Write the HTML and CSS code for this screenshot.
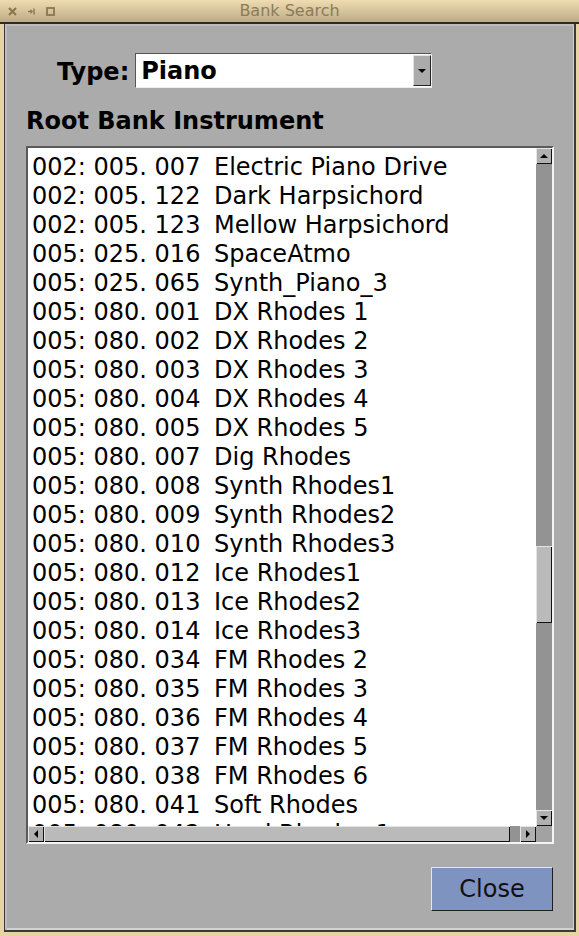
FILE: index.html
```html
<!DOCTYPE html>
<html>
<head>
<meta charset="utf-8">
<link rel="stylesheet" href="styles.css">
</head>
<body>
<div class="window">
  <div class="titlebar">
    <div class="tb-icons">
      <svg class="ic" width="9" height="9" viewBox="0 0 9 9"><path d="M1 1L8 8M8 1L1 8" stroke="#8a7750" stroke-width="2.2" fill="none"/></svg>
      <svg class="ic pin" width="7" height="7" viewBox="0 0 7 7"><path d="M0 3.5H4" stroke="#8a7750" stroke-width="1.4" fill="none"/><path d="M2.5 1L5 3.5L2.5 6Z" fill="#8a7750"/><path d="M6 0.5V6.5" stroke="#8a7750" stroke-width="1.4"/></svg>
      <svg class="ic" width="9" height="9" viewBox="0 0 9 9"><rect x="1" y="1" width="7" height="7" stroke="#8a7750" stroke-width="1.8" fill="none"/></svg>
    </div>
    <div class="title">Bank Search</div>
    <div></div>
  </div>
  <div class="frame">
    <div class="client">
      <div class="type-row">
        <span class="type-label">Type:</span>
        <div class="choice">
          <span class="choice-text">Piano</span>
          <span class="choice-btn"><span class="tri tri-down"></span></span>
        </div>
      </div>
      <div class="heading">Root Bank Instrument</div>
      <div class="browser">
        <div class="rows">
          <div class="row"><span class="num">002: 005. 007</span><span>Electric Piano Drive</span></div>
          <div class="row"><span class="num">002: 005. 122</span><span>Dark Harpsichord</span></div>
          <div class="row"><span class="num">002: 005. 123</span><span>Mellow Harpsichord</span></div>
          <div class="row"><span class="num">005: 025. 016</span><span>SpaceAtmo</span></div>
          <div class="row"><span class="num">005: 025. 065</span><span>Synth_Piano_3</span></div>
          <div class="row"><span class="num">005: 080. 001</span><span>DX Rhodes 1</span></div>
          <div class="row"><span class="num">005: 080. 002</span><span>DX Rhodes 2</span></div>
          <div class="row"><span class="num">005: 080. 003</span><span>DX Rhodes 3</span></div>
          <div class="row"><span class="num">005: 080. 004</span><span>DX Rhodes 4</span></div>
          <div class="row"><span class="num">005: 080. 005</span><span>DX Rhodes 5</span></div>
          <div class="row"><span class="num">005: 080. 007</span><span>Dig Rhodes</span></div>
          <div class="row"><span class="num">005: 080. 008</span><span>Synth Rhodes1</span></div>
          <div class="row"><span class="num">005: 080. 009</span><span>Synth Rhodes2</span></div>
          <div class="row"><span class="num">005: 080. 010</span><span>Synth Rhodes3</span></div>
          <div class="row"><span class="num">005: 080. 012</span><span>Ice Rhodes1</span></div>
          <div class="row"><span class="num">005: 080. 013</span><span>Ice Rhodes2</span></div>
          <div class="row"><span class="num">005: 080. 014</span><span>Ice Rhodes3</span></div>
          <div class="row"><span class="num">005: 080. 034</span><span>FM Rhodes 2</span></div>
          <div class="row"><span class="num">005: 080. 035</span><span>FM Rhodes 3</span></div>
          <div class="row"><span class="num">005: 080. 036</span><span>FM Rhodes 4</span></div>
          <div class="row"><span class="num">005: 080. 037</span><span>FM Rhodes 5</span></div>
          <div class="row"><span class="num">005: 080. 038</span><span>FM Rhodes 6</span></div>
          <div class="row"><span class="num">005: 080. 041</span><span>Soft Rhodes</span></div>
          <div class="row"><span class="num">005: 080. 042</span><span>Hard Rhodes 1</span></div>
        </div>
        <div class="vscroll">
          <div class="sb-btn"><span class="tri tri-up"></span></div>
          <div class="trough vtrough"><div class="thumb" style="margin-top:382px;height:77px"></div></div>
          <div class="sb-btn"><span class="tri tri-down"></span></div>
        </div>
        <div class="hscroll">
          <div class="sb-btn"><span class="tri tri-left"></span></div>
          <div class="trough htrough"><div class="thumb" style="width:466px"></div></div>
          <div class="sb-btn"><span class="tri tri-right"></span></div>
        </div>
        <div class="corner"></div>
      </div>
      <div class="actions">
        <button class="close">Close</button>
      </div>
    </div>
  </div>
</div>
</body>
</html>
```
FILE: styles.css
```css
html, body {
  margin: 0;
  padding: 0;
}
body {
  font-family: "DejaVu Sans", "Noto Sans", sans-serif;
  background: #e8d3a5;
}
.window {
  width: 579px;
  height: 936px;
  display: flex;
  flex-direction: column;
  background: #e8d3a5;
}
.titlebar {
  flex: none;
  height: 22px;
  border-bottom: 2px solid #2c2a26;
  background: linear-gradient(#f0dcb1, #bbab86);
  display: grid;
  grid-template-columns: 1fr auto 1fr;
  align-items: center;
}
.tb-icons {
  display: flex;
  align-items: center;
  padding-left: 8px;
}
.tb-icons .ic {
  display: block;
}
.tb-icons .pin {
  margin-left: 11px;
  margin-right: 11px;
}
.title {
  font-size: 16px;
  line-height: 22px;
  color: #8c7b59;
}
.frame {
  flex: 1;
  display: flex;
  padding: 0 3px 4px 4px;
}
.client {
  flex: 1;
  display: flex;
  flex-direction: column;
  background: #ababab;
  border-left: 1px solid #3a3a3a;
  border-right: 2px solid #3a3a3a;
  border-bottom: 2px solid #3a3a3a;
  box-shadow: inset 2px 2px 0 #bdbdbd, inset -1px -2px 0 #d2d2d2;
  padding: 29px 20px 0 21px;
}
.type-row {
  display: flex;
  align-items: center;
  gap: 6px;
  padding-left: 31px;
  height: 35px;
}
.type-label {
  font-weight: bold;
  font-size: 24px;
  color: #000;
  position: relative;
  top: 1px;
}
.choice {
  width: 297px;
  height: 35px;
  box-sizing: border-box;
  background: #fff;
  border: 1px solid;
  border-color: #555 #efefef #efefef #555;
  display: flex;
  align-items: center;
}
.choice-text {
  flex: 1;
  padding-left: 5px;
  padding-top: 2px;
  font-weight: bold;
  font-size: 24px;
  line-height: 31px;
  color: #000;
}
.choice-btn {
  width: 18px;
  height: 31px;
  box-sizing: border-box;
  background: #ababab;
  border: 1px solid;
  border-color: #e2e2e2 #222 #222 #e2e2e2;
  display: flex;
  align-items: center;
  justify-content: center;
}
.heading {
  margin-top: 19px;
  font-weight: bold;
  font-size: 24px;
  line-height: 28px;
  color: #000;
}
.browser {
  margin-top: 11px;
  height: 698px;
  box-sizing: border-box;
  border: 2px solid;
  border-color: #5a5a5a #f4f4f4 #f4f4f4 #5a5a5a;
  display: grid;
  grid-template-columns: 1fr 16px;
  grid-template-rows: 1fr 16px;
  background: #fff;
}
.rows {
  overflow: hidden;
  padding: 5px 0 0 4px;
  font-size: 24px;
  line-height: 29px;
  color: #000;
  min-height: 0;
}
.row {
  display: flex;
  white-space: pre;
}
.num {
  width: 182px;
  flex: none;
}
.vscroll {
  display: flex;
  flex-direction: column;
  min-height: 0;
}
.hscroll {
  display: flex;
}
.sb-btn {
  width: 16px;
  height: 16px;
  box-sizing: border-box;
  flex: none;
  background: #b0b0b0;
  box-shadow: inset 1px 1px 0 #e6e6e6, inset -1px -1px 0 #111;
  display: flex;
  align-items: center;
  justify-content: center;
}
.trough {
  flex: 1;
  background: #939393;
  display: flex;
}
.vtrough {
  flex-direction: column;
}
.htrough .thumb {
  height: 16px;
}
.vtrough .thumb {
  width: 16px;
}
.thumb {
  box-sizing: border-box;
  flex: none;
  background: #bababa;
  box-shadow: inset 1px 1px 0 #e4e4e4, inset -1px -1px 0 #111;
}
.corner {
  background: #a2a2a2;
}
.tri {
  width: 0;
  height: 0;
  display: block;
}
.tri-down {
  border-left: 4px solid transparent;
  border-right: 4px solid transparent;
  border-top: 4px solid #000;
}
.tri-up {
  border-left: 4px solid transparent;
  border-right: 4px solid transparent;
  border-bottom: 4px solid #000;
}
.tri-left {
  border-top: 4px solid transparent;
  border-bottom: 4px solid transparent;
  border-right: 4px solid #000;
}
.tri-right {
  border-top: 4px solid transparent;
  border-bottom: 4px solid transparent;
  border-left: 4px solid #000;
}
.actions {
  margin-top: 23px;
  display: flex;
  justify-content: flex-end;
  padding-right: 1px;
}
.close {
  width: 122px;
  height: 44px;
  box-sizing: border-box;
  margin: 0;
  padding: 0;
  font-family: "DejaVu Sans", sans-serif;
  font-size: 24px;
  color: #111;
  background: #7f93c1;
  border: 1px solid;
  border-color: #e6e6e6 #1e1e1e #1e1e1e #e6e6e6;
  border-radius: 0;
}
```
